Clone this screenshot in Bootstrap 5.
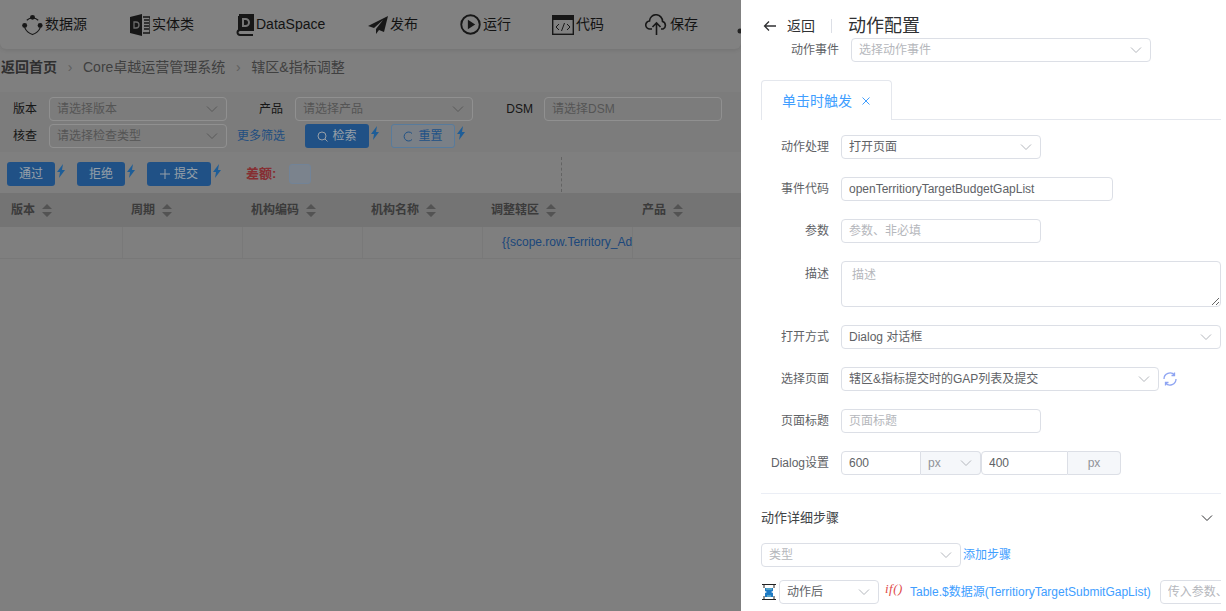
<!DOCTYPE html>
<html lang="zh-CN"><head><meta charset="utf-8"><title>动作配置</title>
<link href="https://cdn.jsdelivr.net/npm/bootstrap@5.3.0/dist/css/bootstrap.min.css" rel="stylesheet">
<style>
html,body{height:611px;overflow:hidden}
body{font-family:"Liberation Sans","Noto Sans CJK SC",sans-serif;font-size:12px;color:#222;background:#b6b6b6;position:relative;width:1226px}
.pg{width:741px;height:611px;overflow:hidden}
.tb{height:49px;border-radius:0 0 6px 6px;box-shadow:0 1px 4px rgba(0,0,0,.1);background:#b9b9b9;color:#1c1c1c;font-size:14px;padding-left:22px;white-space:nowrap}
.tb svg{flex:none}
.tb span{margin-left:2px}
.ti1{width:108px;flex:none}.ti2{width:106px;flex:none}.ti3{width:132px;flex:none}.ti4{width:92px;flex:none}.ti5{width:93px;flex:none}
.tdot{margin-top:12px}
.crumb{height:36px;margin-bottom:7px;padding-left:1px;font-size:14px;color:#5c5c5c}
.crumb b{font-weight:700;color:#444}
.crumb i{font-style:normal;color:#888;width:26px;text-align:center}
.flt{height:60px;background:#b2b2b2;padding:5px 0 0 13px}
.frow{height:24px;margin-bottom:3px}
.flab{width:36px}
.fsel{width:178px;flex:none}
.flb2{width:56px;margin-right:12px}.flb3{width:60px;margin-right:11px}
.flt .fc{background-color:transparent;border-color:#cfcfcf;color:#7a7a7a}
.flt .fc::placeholder{color:#7a7a7a}
.flt select.fc{background-image:url("data:image/svg+xml,%3csvg xmlns='http://www.w3.org/2000/svg' viewBox='0 0 12 12'%3e%3cpath fill='none' stroke='%23808080' d='M1 3.5l5 5 5-5'/%3e%3c/svg%3e")}
.more{width:68px;margin-left:10px;color:#2f70b8}
.bolt{flex:none;margin:-6px 0 0 2px}
.bolt path{fill:#2c86d8}
.bp{height:24px;background:#2f75c0;border:0;color:#d8e4f0;font-size:12px;border-radius:3px;padding:0;display:flex;align-items:center;justify-content:center}
.bp svg *{stroke:#d8e4f0}
.w48{width:48px}.w64{width:64px}.ml12{margin-left:12px}
.bo{height:24px;background:#afb8c2;border:1px solid #7eb0e0;color:#2f75c0;font-size:12px;border-radius:3px;padding:0;display:flex;align-items:center;justify-content:center;width:64px}
.bo svg *{stroke:#2f75c0}
.tbar{height:36px;margin-top:4px;background:#b7b7b7;padding:0 0 0 7px}
.cha{color:#c04248;font-weight:700;font-size:13px;margin-left:25px;width:43px}
.cbox{width:22px;height:20px;background:#b0bccb;border:1px solid #a4bcd8;border-radius:3px}
.dash{border-left:1px dashed #8f8f8f;height:35px;margin-left:250px}
.thd{height:34px;background:#a6a6a6;margin-top:1px;font-weight:700;color:#555;display:flex}
.trw{height:32px;background:#b6b6b6;border-bottom:1px solid #adadad;display:flex}
.tc{flex:none;padding-left:8px;display:flex;align-items:center;white-space:nowrap;overflow:hidden;border-right:1px solid #aeaeae}
.thd .tc{border-color:#a6a6a6}
.tc svg{margin-left:7px;flex:none}
.tc svg path{fill:#777}
.c1{width:123px;padding-left:11px}.c2{width:120px}.c3{width:150px}.c4{width:108px;padding-left:9px}
.trw .c3{padding:0 0 1px 19px;color:#2a66b0}
.ov{position:absolute;inset:0;background:rgba(0,0,0,.3)}
.drw{position:absolute;top:0;bottom:0;left:741px;width:485px;background:#fff;overflow:hidden;padding:0 5px 0 20px;color:#606266}
.dhd{height:38px;color:#303133;padding-top:14px}
.dhd>svg{margin-left:2px}
.dhd .bk{font-size:14px;margin-left:10px}
.dhd .sp{width:1px;height:14px;background:#dcdfe6;margin:0 16px}
.dhd .ti{font-size:18px;line-height:24px}
.lb{width:68px;flex:none;text-align:right;margin-right:12px;color:#606266;line-height:24px}
.evt{height:42px}
.evt .lb{width:78px}
.fc{height:24px;min-height:24px;padding:0 7px;font-size:12px;border:1px solid #dcdfe6;border-radius:4px;color:#606266;line-height:22px}
.fc::placeholder{color:#b5b7bc}
select.fc{padding:0 24px 0 7px;background-repeat:no-repeat;background-position:right 8px center;background-size:12px 12px;background-image:url("data:image/svg+xml,%3csvg xmlns='http://www.w3.org/2000/svg' viewBox='0 0 12 12'%3e%3cpath fill='none' stroke='%23b4b7bd' d='M1 3.5l5 5 5-5'/%3e%3c/svg%3e")}
select.ph{color:#b5b7bc}
.tabs{height:40px;border-bottom:1px solid #e4e7ed;margin-bottom:15px}
.tabx{width:131px;height:40px;border:1px solid #e4e7ed;border-bottom:0;border-radius:4px 4px 0 0;background:#fff;color:#409eff;font-size:14px;padding:1px 0 0 20px;margin-bottom:-1px}
.tabx svg{margin-left:10px}
.rw{margin-bottom:18px}
.w200{width:200px}.w272{width:272px}.w380{width:380px}.w318{width:318px}.w300{width:300px}.w100{width:100px;flex:none}
.tall .lb{padding-top:1px}
textarea.fc{height:46px;padding:3px 10px;resize:vertical;line-height:20px}
.dbox{width:140px;flex:none}
.inl{flex:none;border-radius:4px 0 0 4px}
.w80{width:80px}.w87{width:87px}
.ad{background-color:#f5f7fa;flex:none;color:#909399;border-radius:0 4px 4px 0;border-left:0}
.w60{width:60px}.w53{width:53px}
span.ad{display:flex;align-items:center;justify-content:center}
.sec{border-top:1px solid #ebeef5;height:48px;margin-bottom:2px;color:#404246;font-size:13px;padding-right:8px}
.addl{color:#409eff;margin-left:2px}
.stp{margin-top:13px;overflow:hidden;white-space:nowrap;width:460px}
.hgl{margin-right:2px;flex:none}
.fnx{font-family:"Liberation Serif",serif;font-style:italic;color:#e04a4a;font-size:13px;width:25px;margin:-6px 0 0 6px;letter-spacing:.5px;flex:none}
.tgt{color:#409eff;flex:none}
.par{width:90px;flex:none;margin-left:9px}
</style></head><body>
<div class="pg">
 <div class="tb d-flex align-items-center">
  <div class="d-flex align-items-center ti1"><svg width="21" height="24" viewBox="0 0 22 24"><path d="M5 7a9 9 0 0 1 12 0M3 15q2 5 8 7q6-2 8-7" fill="none" stroke="#222" stroke-width="1.2"/><circle cx="11" cy="4" r="2.6" fill="#222"/><circle cx="2.8" cy="12.5" r="2.6" fill="#222"/><circle cx="19" cy="12.5" r="2.6" fill="#222"/></svg><span>数据源</span></div>
  <div class="d-flex align-items-center ti2"><svg width="20" height="22" viewBox="0 0 20 22"><path d="M0 3l12-3v22l-12-3z" fill="#222"/><path d="M13 3h7v16h-7M14 6h5M14 9h5M14 12h5M14 15h5" fill="none" stroke="#222" stroke-width="1.3"/><path d="M4 8h2a3 3 0 0 1 0 6H4z" fill="none" stroke="#999" stroke-width="1.3"/></svg><span>实体类</span></div>
  <div class="d-flex align-items-center ti3"><svg width="18" height="22" viewBox="0 0 18 22"><path d="M3 1h14v15H4a2 2 0 0 0 0 5h13" fill="none" stroke="#222" stroke-width="2"/><path d="M2 2h15v14H3l-1 2z" fill="#222"/><path d="M6 4h3.500a4.200 4.200 0 0 1 0 9H6zM8 6v5h1.500a2.200 2.200 0 0 0 0-5z" fill="#aaa" fill-rule="evenodd"/></svg><span>DataSpace</span></div>
  <div class="d-flex align-items-center ti4"><svg width="20" height="20" viewBox="0 0 20 20"><path d="M20 1L0 11l6 2 9-8-7 9v5l3-4 5 2z" fill="#222"/></svg><span>发布</span></div>
  <div class="d-flex align-items-center ti4"><svg width="21" height="21" viewBox="0 0 20 20"><circle cx="10" cy="10" r="8.800" fill="none" stroke="#222" stroke-width="1.800"/><path d="M7.500 5.500l7 4.500-7 4.500z" fill="#222"/></svg><span>运行</span></div>
  <div class="d-flex align-items-center ti5"><svg width="22" height="20" viewBox="0 0 22 20"><rect x=".7" y=".7" width="20.600" height="18.600" fill="none" stroke="#222" stroke-width="1.400"/><path d="M1 1h20v4H1z" fill="#222"/><path d="M7 9l-3 3 3 3M15 9l3 3-3 3M12.500 8l-3 8" fill="none" stroke="#222"/></svg><span>代码</span></div>
  <div class="d-flex align-items-center ti4"><svg width="23" height="22" viewBox="0 0 23 22"><path d="M7 15H5a4 4 0 0 1-.5-8 6.500 6.500 0 0 1 13 .5 4 4 0 0 1 .5 7.500h-2M11.500 21V9M7.500 13l4-4 4 4" fill="none" stroke="#222" stroke-width="1.600"/></svg><span>保存</span></div>
  <svg class="tdot" width="4" height="6" viewBox="0 0 4 6"><circle cx="3" cy="3" r="2.500" fill="#333"/></svg>
 </div>
 <div class="crumb d-flex align-items-center"><b>返回首页</b><i>›</i><span>Core卓越运营管理系统</span><i>›</i><span>辖区&amp;指标调整</span></div>
 <div class="flt">
  <div class="frow d-flex align-items-center">
   <span class="flab">版本</span><select class="form-select fc fsel"><option>请选择版本</option></select>
   <span class="text-end flb2">产品</span><select class="form-select fc fsel"><option>请选择产品</option></select>
   <span class="text-end flb3">DSM</span><input class="form-control fc fsel" placeholder="请选择DSM">
  </div>
  <div class="frow d-flex align-items-center">
   <span class="flab">核查</span><select class="form-select fc fsel"><option>请选择检查类型</option></select>
   <a class="text-decoration-none more">更多筛选</a>
   <button class="bp gap-1 w64"><svg width="11" height="11" viewBox="0 0 11 11"><circle cx="5" cy="5" r="4" fill="none"/><path d="M8 8l2.500 2.500"/></svg>检索</button><svg class="bolt" width="8" height="14" viewBox="0 0 8 14"><path d="M6 0L0 8h3l-1 6 6-8H5z"/></svg>
   <button class="bo gap-1 ml12"><svg width="11" height="11" viewBox="0 0 11 11"><path d="M9 2.500A4.500 4.500 0 1 0 9 8.500" fill="none"/></svg>重置</button><svg class="bolt" width="8" height="14" viewBox="0 0 8 14"><path d="M6 0L0 8h3l-1 6 6-8H5z"/></svg>
  </div>
 </div>
 <div class="tbar d-flex align-items-center">
  <button class="bp w48">通过</button><svg class="bolt" width="8" height="14" viewBox="0 0 8 14"><path d="M6 0L0 8h3l-1 6 6-8H5z"/></svg>
  <button class="bp w48 ml12">拒绝</button><svg class="bolt" width="8" height="14" viewBox="0 0 8 14"><path d="M6 0L0 8h3l-1 6 6-8H5z"/></svg>
  <button class="bp gap-1 w64 ml12"><svg width="10" height="10" viewBox="0 0 10 10"><path d="M5 0v10M0 5h10"/></svg>提交</button><svg class="bolt" width="8" height="14" viewBox="0 0 8 14"><path d="M6 0L0 8h3l-1 6 6-8H5z"/></svg>
  <span class="cha">差额:</span><span class="cbox"></span>
  <span class="dash"></span>
 </div>
 <div class="thd">
  <div class="tc c1">版本<svg width="10" height="13" viewBox="0 0 10 13"><path d="M5 0l5 5H0zM5 13l5-5H0z"/></svg></div>
  <div class="tc c2">周期<svg width="10" height="13" viewBox="0 0 10 13"><path d="M5 0l5 5H0zM5 13l5-5H0z"/></svg></div>
  <div class="tc c2">机构编码<svg width="10" height="13" viewBox="0 0 10 13"><path d="M5 0l5 5H0zM5 13l5-5H0z"/></svg></div>
  <div class="tc c2">机构名称<svg width="10" height="13" viewBox="0 0 10 13"><path d="M5 0l5 5H0zM5 13l5-5H0z"/></svg></div>
  <div class="tc c3">调整辖区<svg width="10" height="13" viewBox="0 0 10 13"><path d="M5 0l5 5H0zM5 13l5-5H0z"/></svg></div>
  <div class="tc c4">产品<svg width="10" height="13" viewBox="0 0 10 13"><path d="M5 0l5 5H0zM5 13l5-5H0z"/></svg></div>
 </div>
 <div class="trw">
  <div class="tc c1"></div><div class="tc c2"></div><div class="tc c2"></div><div class="tc c2"></div>
  <div class="tc c3">{{scope.row.Territory_Ad</div><div class="tc c4"></div>
 </div>
</div>
<div class="ov"></div>
<aside class="drw">
 <div class="dhd d-flex align-items-center">
  <svg width="14" height="12" viewBox="0 0 14 12"><path d="M13 6H1.500M6 1.500L1.500 6 6 10.500" fill="none" stroke="#303133" stroke-width="1.300"/></svg>
  <span class="bk">返回</span><span class="sp"></span><span class="ti">动作配置</span>
 </div>
 <div class="evt d-flex"><span class="lb">动作事件</span><select class="form-select fc ph w300"><option>选择动作事件</option></select></div>
 <div class="tabs"><div class="tabx d-flex align-items-center">单击时触发<svg width="8" height="8" viewBox="0 0 8 8"><path d="M.5.5l7 7M7.500.5l-7 7" stroke="#409eff"/></svg></div></div>
 <div class="rw d-flex"><span class="lb">动作处理</span><select class="form-select fc w200"><option>打开页面</option></select></div>
 <div class="rw d-flex"><span class="lb">事件代码</span><input class="form-control fc w272" value="openTerritioryTargetBudgetGapList"></div>
 <div class="rw d-flex"><span class="lb">参数</span><input class="form-control fc w200" placeholder="参数、非必填"></div>
 <div class="rw tall d-flex"><span class="lb">描述</span><textarea class="form-control fc w380" placeholder="描述"></textarea></div>
 <div class="rw d-flex"><span class="lb">打开方式</span><select class="form-select fc w380"><option>Dialog 对话框</option></select></div>
 <div class="rw d-flex align-items-center"><span class="lb">选择页面</span><select class="form-select fc w318"><option>辖区&amp;指标提交时的GAP列表及提交</option></select>
  <svg class="ms-1" width="14" height="14" viewBox="0 0 14 14"><path d="M1 7a6 6 0 0 1 10.500-4M13 7a6 6 0 0 1-10.500 4M11.500 .5v3h-3M2.500 13.500v-3h3" fill="none" stroke="#8ea4f2" stroke-width="1.300"/></svg></div>
 <div class="rw d-flex"><span class="lb">页面标题</span><input class="form-control fc w200" placeholder="页面标题"></div>
 <div class="rw d-flex"><span class="lb">Dialog设置</span>
  <div class="d-flex dbox"><input class="form-control fc inl w80" value="600"><select class="form-select fc ad w60"><option>px</option></select></div>
  <div class="d-flex dbox"><input class="form-control fc inl w87" value="400"><span class="fc ad w53">px</span></div>
 </div>
 <div class="sec d-flex align-items-center justify-content-between"><span>动作详细步骤</span><svg width="12" height="12" viewBox="0 0 12 12"><path d="M1 3.500l5 5 5-5" fill="none" stroke="#303133"/></svg></div>
 <div class="d-flex align-items-center"><select class="form-select fc ph w200"><option>类型</option></select><a class="text-decoration-none addl">添加步骤</a></div>
 <div class="stp d-flex align-items-center">
  <svg class="hgl" width="16" height="16" viewBox="0 0 16 16"><path d="M1 .5h14M1 15.500h14M3 1v3M13 1v3M3 12v3M13 12v3" fill="none" stroke="#222"/><path d="M4 4h8v3l-2 1 2 1v4H4V9l2-1-2-1z" fill="#1e7ac4"/><path d="M5 5h6M6 12h4" stroke="#8cc"/></svg>
  <select class="form-select fc w100"><option>动作后</option></select>
  <span class="fnx">if()</span>
  <a class="text-decoration-none tgt">Table.$数据源(TerritioryTargetSubmitGapList)</a>
  <input class="form-control fc par" placeholder="传入参数、">
 </div>
</aside>
</body></html>
